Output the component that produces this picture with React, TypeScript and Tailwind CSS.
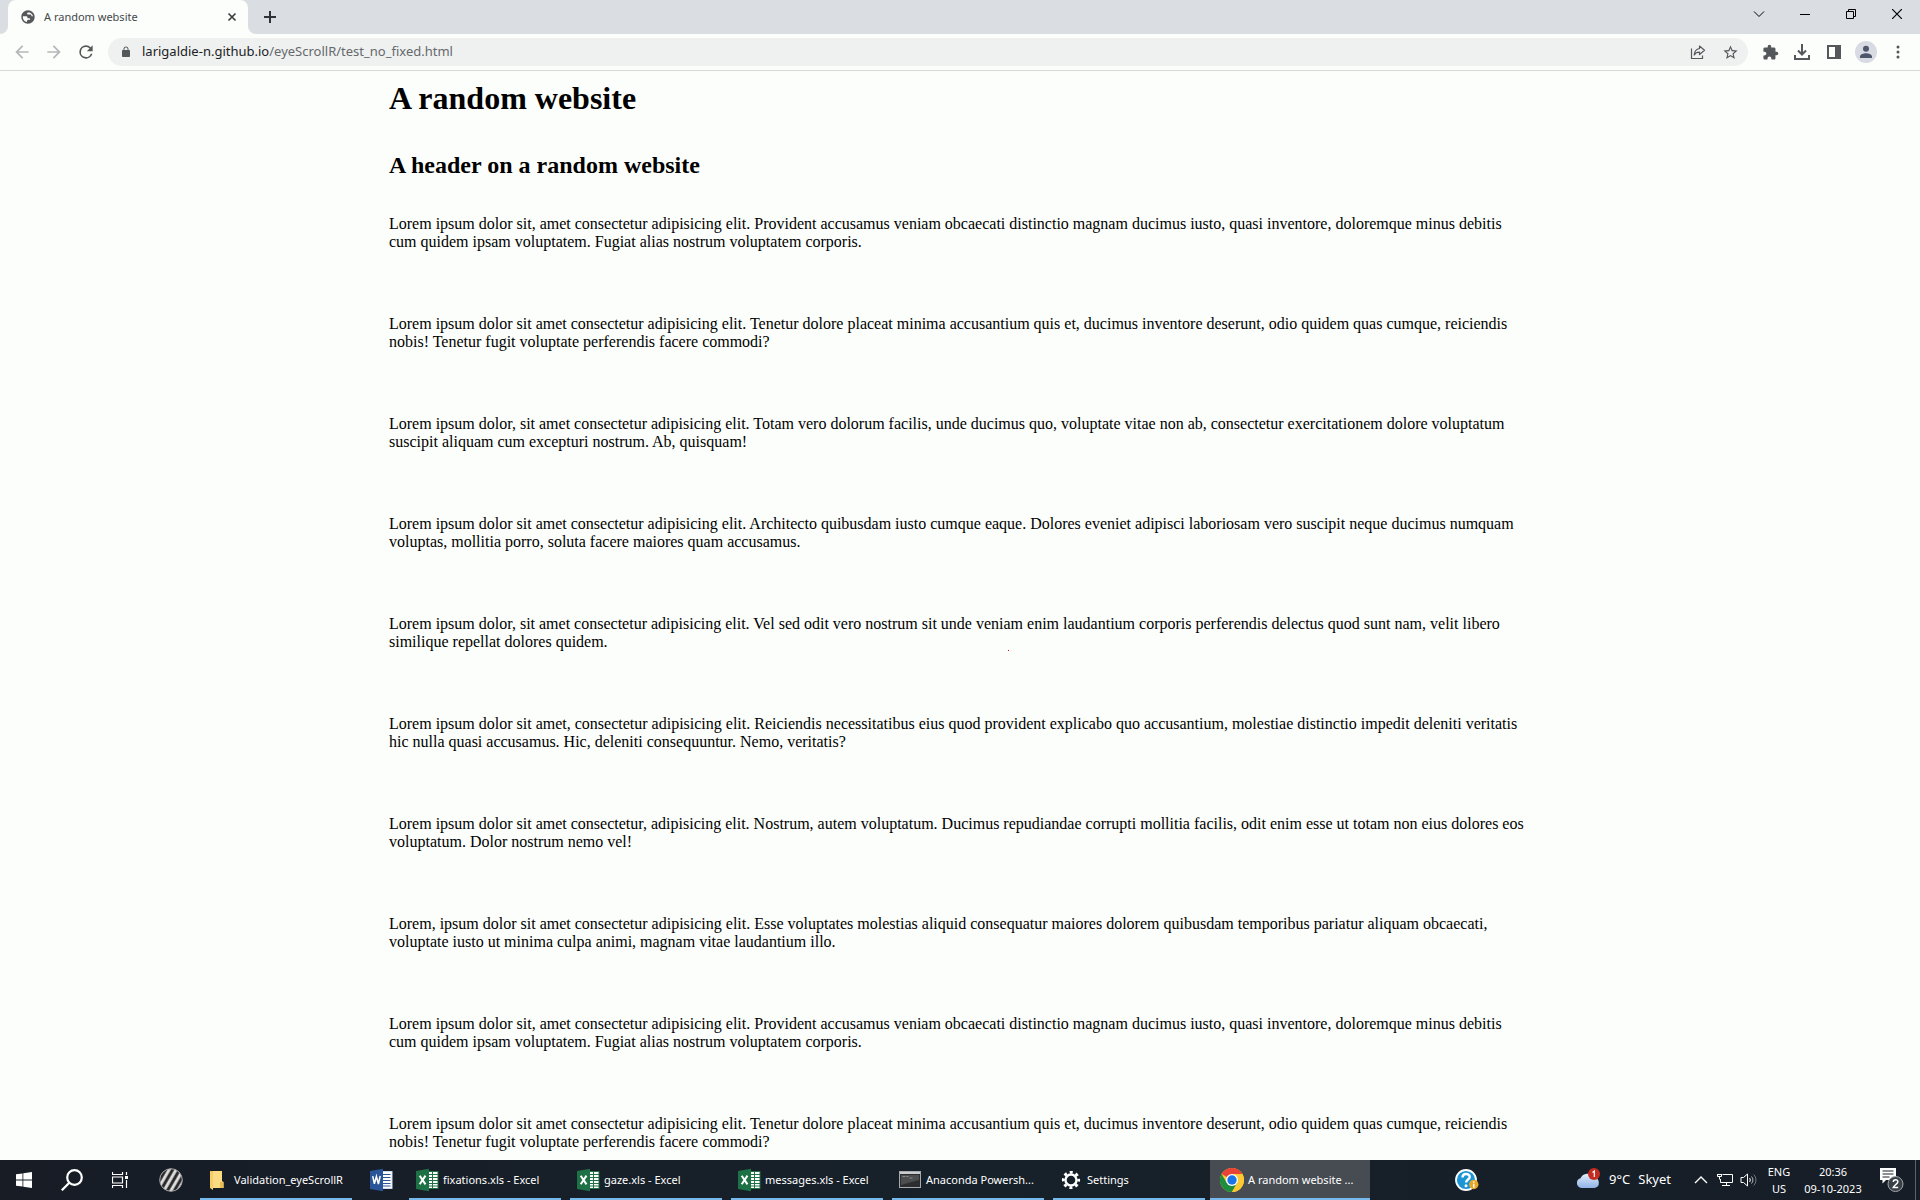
import React from "react";

const paragraphs = [
  "Lorem ipsum dolor sit, amet consectetur adipisicing elit. Provident accusamus veniam obcaecati distinctio magnam ducimus iusto, quasi inventore, doloremque minus debitis cum quidem ipsam voluptatem. Fugiat alias nostrum voluptatem corporis.",
  "Lorem ipsum dolor sit amet consectetur adipisicing elit. Tenetur dolore placeat minima accusantium quis et, ducimus inventore deserunt, odio quidem quas cumque, reiciendis nobis! Tenetur fugit voluptate perferendis facere commodi?",
  "Lorem ipsum dolor, sit amet consectetur adipisicing elit. Totam vero dolorum facilis, unde ducimus quo, voluptate vitae non ab, consectetur exercitationem dolore voluptatum suscipit aliquam cum excepturi nostrum. Ab, quisquam!",
  "Lorem ipsum dolor sit amet consectetur adipisicing elit. Architecto quibusdam iusto cumque eaque. Dolores eveniet adipisci laboriosam vero suscipit neque ducimus numquam voluptas, mollitia porro, soluta facere maiores quam accusamus.",
  "Lorem ipsum dolor, sit amet consectetur adipisicing elit. Vel sed odit vero nostrum sit unde veniam enim laudantium corporis perferendis delectus quod sunt nam, velit libero similique repellat dolores quidem.",
  "Lorem ipsum dolor sit amet, consectetur adipisicing elit. Reiciendis necessitatibus eius quod provident explicabo quo accusantium, molestiae distinctio impedit deleniti veritatis hic nulla quasi accusamus. Hic, deleniti consequuntur. Nemo, veritatis?",
  "Lorem ipsum dolor sit amet consectetur, adipisicing elit. Nostrum, autem voluptatum. Ducimus repudiandae corrupti mollitia facilis, odit enim esse ut totam non eius dolores eos voluptatum. Dolor nostrum nemo vel!",
  "Lorem, ipsum dolor sit amet consectetur adipisicing elit. Esse voluptates molestias aliquid consequatur maiores dolorem quibusdam temporibus pariatur aliquam obcaecati, voluptate iusto ut minima culpa animi, magnam vitae laudantium illo.",
  "Lorem ipsum dolor sit, amet consectetur adipisicing elit. Provident accusamus veniam obcaecati distinctio magnam ducimus iusto, quasi inventore, doloremque minus debitis cum quidem ipsam voluptatem. Fugiat alias nostrum voluptatem corporis.",
  "Lorem ipsum dolor sit amet consectetur adipisicing elit. Tenetur dolore placeat minima accusantium quis et, ducimus inventore deserunt, odio quidem quas cumque, reiciendis nobis! Tenetur fugit voluptate perferendis facere commodi?",
];

type IconProps = { d: string; className?: string; size?: number };

/* Filled glyph on a 24-unit grid */
function Glyph({ d, className = "", size = 18 }: IconProps) {
  return (
    <svg width={size} height={size} viewBox="0 0 24 24" fill="currentColor" className={className} aria-hidden="true">
      <path d={d} />
    </svg>
  );
}

const BACK = "M20 11H7.83l5.59-5.59L12 4l-8 8 8 8 1.41-1.41L7.83 13H20v-2z";
const FORWARD = "M12 4l-1.41 1.41L16.17 11H4v2h12.17l-5.58 5.59L12 20l8-8z";
const RELOAD =
  "M17.65 6.35A7.96 7.96 0 0 0 12 4a8 8 0 1 0 7.73 10h-2.08A6 6 0 1 1 12 6c1.66 0 3.14.69 4.22 1.78L13 11h7V4l-2.35 2.35z";
const LOCK =
  "M18 8h-1V6c0-2.76-2.24-5-5-5S7 3.24 7 6v2H6c-1.100 0-2 .9-2 2v10c0 1.100.9 2 2 2h12c1.100 0 2-.9 2-2V10c0-1.100-.9-2-2-2zM8.900 6c0-1.710 1.390-3.100 3.100-3.100s3.100 1.390 3.100 3.100v2H8.900V6z";
const GLOBE =
  "M12 2C6.480 2 2 6.480 2 12s4.480 10 10 10 10-4.480 10-10S17.520 2 12 2zm-1.500 17.600C7 19 4.300 15.900 4.300 12.200c0-.4 0-.8.1-1.200h4.800c1.200 0 2.100.9 2.100 2v.9h2.300c1 0 1.700.8 1.700 1.700v.6h-2.600c-1.200 0-2.200 1-2.200 2.200v1.200zM19.600 11h-2.400v-.9c0-.9-.8-1.700-1.700-1.700h-3.200c-.9 0-1.600-.7-1.600-1.600 0-1 .8-1.700 1.700-1.700h2.100c2.500 1 4.500 3.200 5.100 5.900z";
const STAR =
  "M22 9.240l-7.190-.62L12 2 9.190 8.630 2 9.240l5.460 4.730L5.820 21 12 17.270 18.180 21l-1.630-7.030L22 9.240zM12 15.400l-3.760 2.270 1-4.280-3.320-2.880 4.380-.38L12 6.100l1.710 4.040 4.380.38-3.320 2.880 1 4.280L12 15.400z";
const PUZZLE =
  "M20.500 11H19V7c0-1.100-.9-2-2-2h-4V3.500a2.500 2.500 0 0 0-5 0V5H4c-1.100 0-1.990.9-1.990 2v3.800H3.500c1.490 0 2.700 1.210 2.700 2.700s-1.210 2.700-2.700 2.700H2V20c0 1.100.9 2 2 2h3.800v-1.500c0-1.490 1.210-2.700 2.700-2.700s2.700 1.210 2.700 2.700V22H17c1.100 0 2-.9 2-2v-4h1.500a2.500 2.500 0 0 0 0-5z";
const PERSON = "M12 11.500a4.500 4.500 0 1 0 0-9 4.500 4.500 0 0 0 0 9zm0 2.200c-3.600 0-9 1.700-9 5.100V21h18v-2.200c0-3.400-5.400-5.100-9-5.100z";

function ExcelIcon() {
  return (
    <svg width="24" height="24" viewBox="0 0 24 24" aria-hidden="true">
      <rect x="12" y="3.500" width="11" height="17" fill="#fff" stroke="#207245" />
      <path d="M13 6.500h10M13 9.500h10M13 12.500h10M13 15.500h10M13 18h10M17.500 4v16" stroke="#207245" strokeWidth="1" />
      <path d="M1 3l13-2.300v22.600L1 21z" fill="#1e7145" />
      <path d="M4.700 7.800l5.800 8.600M10.500 7.600l-5.800 8.600" stroke="#fff" strokeWidth="2" />
    </svg>
  );
}

function WordIcon() {
  return (
    <svg width="24" height="24" viewBox="0 0 24 24" aria-hidden="true">
      <rect x="12" y="3.500" width="11" height="17" fill="#fff" stroke="#cfdcf0" />
      <path d="M13 6.500h8.500M13 9.500h8.500M13 12.500h8.500M13 15.500h8.500M13 18h8.500" stroke="#2a5699" strokeWidth="1.200" />
      <path d="M1 3l13-2.300v22.600L1 21z" fill="#2a5699" />
      <path d="M3.700 8.200l1.700 7.600 2-7.400 2 7.600 1.800-8" fill="none" stroke="#fff" strokeWidth="1.500" />
    </svg>
  );
}

function FolderIcon() {
  return (
    <svg width="24" height="24" viewBox="0 0 24 24" aria-hidden="true">
      <path d="M4 3h12v17H4z" fill="#e9b94a" />
      <path d="M7 3h9v10l1.500 1v6H7z" fill="#fbdc83" />
      <path d="M4 3l3 1.500V22l-3-2z" fill="#f6cf6c" />
      <path d="M14 14h3.500v6H14z" fill="#e9bd55" />
    </svg>
  );
}

function TerminalIcon() {
  return (
    <svg width="24" height="24" viewBox="0 0 24 24" aria-hidden="true">
      <rect x="1.500" y="3.500" width="21" height="16" fill="#2b2d2f" stroke="#a8abad" />
      <path d="M2 4h20v2H2z" fill="#c9cbcc" />
      <path d="M3 7h18v5L3 17z" fill="#4b4d4f" />
      <path d="M4.500 8.500h3M8.500 8.500h2M11.500 10h3" stroke="#898b8d" />
    </svg>
  );
}

function GearIcon() {
  return (
    <svg width="24" height="24" viewBox="0 0 24 24" fill="none" stroke="#fff" aria-hidden="true">
      <circle cx="12" cy="12" r="5.500" strokeWidth="2.400" />
      <circle cx="12" cy="12" r="7.700" strokeWidth="2.800" strokeDasharray="3 3.047" strokeDashoffset="1.500" />
    </svg>
  );
}

function ChromeIcon() {
  return (
    <svg width="24" height="24" viewBox="0 0 24 24" aria-hidden="true">
      <circle cx="12" cy="12" r="12" fill="#fcc934" />
      <path d="M12 12L1.600 6A12 12 0 0 1 22.400 6z" fill="#ea4335" />
      <path d="M1.600 6A12 12 0 0 0 12 24l5.200-9L12 12 6.800 15z" fill="#1e8e3e" />
      <path d="M12 6h10.400A12 12 0 0 1 12 24l5.200-9z" fill="#fcc934" />
      <circle cx="12" cy="12" r="6" fill="#fff" />
      <circle cx="12" cy="12" r="4.700" fill="#1a73e8" />
    </svg>
  );
}

function StripedBallIcon() {
  return (
    <svg width="24" height="24" viewBox="0 0 24 24" aria-hidden="true">
      <defs>
        <linearGradient id="stripe" x1="0" y1="0" x2="5.200" y2="3" gradientUnits="userSpaceOnUse" spreadMethod="repeat">
          <stop offset="0" stopColor="#222" />
          <stop offset="0.250" stopColor="#333" />
          <stop offset="0.500" stopColor="#e6e6e6" />
          <stop offset="0.750" stopColor="#d0d0d0" />
          <stop offset="1" stopColor="#222" />
        </linearGradient>
      </defs>
      <circle cx="12" cy="12" r="11.300" fill="url(#stripe)" stroke="#a5a5a5" />
    </svg>
  );
}

const tasks = [
  { label: "fixations.xls - Excel", icon: <ExcelIcon /> },
  { label: "gaze.xls - Excel", icon: <ExcelIcon /> },
  { label: "messages.xls - Excel", icon: <ExcelIcon /> },
  { label: "Anaconda Powersh...", icon: <TerminalIcon /> },
  { label: "Settings", icon: <GearIcon /> },
  { label: "A random website ...", icon: <ChromeIcon />, active: true },
];

function TaskButton({ label, icon, active = false }: { label: string; icon: React.ReactNode; active?: boolean }) {
  return (
    <button
      type="button"
      className={
        active
          ? "flex h-10 w-40 shrink-0 flex-col bg-[#474b52]"
          : "flex h-10 w-40 shrink-0 flex-col px-1"
      }
    >
      <span
        className={
          active
            ? "flex w-full flex-1 items-center gap-1 border-b-2 border-[#76b9ed] pt-0.5 pl-2.5"
            : "flex w-full flex-1 items-center gap-1 border-b-2 border-[#76b9ed] pt-0.5 pl-1.5"
        }
      >
        <span className="shrink-0">{icon}</span>
        <span className="whitespace-nowrap">{label}</span>
      </span>
    </button>
  );
}

function IconButton({ label, className, children }: { label: string; className: string; children: React.ReactNode }) {
  return (
    <button type="button" aria-label={label} className={`flex shrink-0 items-center justify-center ${className}`}>
      {children}
    </button>
  );
}

function TabStrip() {
  return (
    <div className="flex h-[34px] shrink-0 bg-[#dadde2]">
      <div className="flex w-2 items-end bg-[#fcfefb]">
        <span className="h-full w-full rounded-br-lg bg-[#dadde2]" />
      </div>
      <div className="bg-[#dadde2]">
        <div className="flex h-full w-60 items-center rounded-t-lg bg-[#fcfefb] pr-2 pl-3">
          <Glyph d={GLOBE} size={16} className="text-[#55585b]" />
          <span className="ml-2 flex-1 text-[11px] text-[#45484b]">A random website</span>
          <IconButton label="Close tab" className="size-4 text-[#3c4043]">
            <svg width="10" height="10" viewBox="0 0 10 10" stroke="currentColor" strokeWidth="1.700" aria-hidden="true">
              <path d="M1.500 1.500l7 7M8.500 1.500l-7 7" />
            </svg>
          </IconButton>
        </div>
      </div>
      <div className="flex w-2 bg-[#fcfefb]">
        <span className="h-full w-full rounded-bl-lg bg-[#dadde2]" />
      </div>
      <IconButton label="New tab" className="w-7 text-[#2f3336]">
        <svg width="12" height="12" viewBox="0 0 12 12" stroke="currentColor" strokeWidth="2" aria-hidden="true">
          <path d="M6 0v12M0 6h12" />
        </svg>
      </IconButton>
      <div className="ml-auto flex h-7 text-black">
        <IconButton label="Search tabs" className="w-[46px]">
          <svg width="12" height="8" viewBox="0 0 12 8" fill="none" stroke="currentColor" aria-hidden="true">
            <path d="M1 1.500l5 5 5-5" />
          </svg>
        </IconButton>
        <IconButton label="Minimize" className="w-[46px]">
          <svg width="10" height="10" viewBox="0 0 10 10" stroke="currentColor" aria-hidden="true">
            <path d="M0 5.500h10" />
          </svg>
        </IconButton>
        <IconButton label="Restore" className="w-[46px]">
          <svg width="10" height="10" viewBox="0 0 10 10" fill="none" stroke="currentColor" aria-hidden="true">
            <path d="M.5 2.500h7v7h-7zM2.500 2.500v-2h7v7h-2" />
          </svg>
        </IconButton>
        <IconButton label="Close" className="w-[46px]">
          <svg width="10" height="10" viewBox="0 0 10 10" stroke="currentColor" strokeWidth="1.200" aria-hidden="true">
            <path d="M0 0l10 10M10 0L0 10" />
          </svg>
        </IconButton>
      </div>
    </div>
  );
}

function Toolbar() {
  return (
    <div className="flex h-[37px] shrink-0 items-center border-b border-[#d6d8d9] bg-[#fcfefb] px-1.5 text-[#55585b]">
      <IconButton label="Back" className="h-7 w-8 text-[#b5b7b9]">
        <Glyph d={BACK} size={20} />
      </IconButton>
      <IconButton label="Forward" className="h-7 w-8 text-[#b5b7b9]">
        <Glyph d={FORWARD} size={20} />
      </IconButton>
      <IconButton label="Reload" className="h-7 w-8">
        <Glyph d={RELOAD} size={20} />
      </IconButton>
      <div className="mx-1.5 flex h-7 flex-1 items-center rounded-full bg-[#eff1f0] pr-0.5 pl-3">
        <Glyph d={LOCK} size={12} />
        <a href="#page" className="ml-2.5 flex-1 text-[13px] whitespace-nowrap text-[#66696c]">
          <span className="text-[#202124]">larigaldie-n.github.io</span>/eyeScrollR/test_no_fixed.html
        </a>
        <IconButton label="Share" className="h-7 w-8">
          <svg width="16" height="16" viewBox="0 0 16 16" fill="none" stroke="currentColor" strokeWidth="1.200" aria-hidden="true">
            <path d="M1.500 4.500v10h11v-3" />
            <path d="M9.500 2l5 4.300-5 4.200V8.200C7 8.200 5.300 9 4.200 11c.3-3.700 2.200-6 5.300-6.500z" strokeLinejoin="round" />
          </svg>
        </IconButton>
        <IconButton label="Bookmark" className="h-7 w-8">
          <Glyph d={STAR} size={17} />
        </IconButton>
      </div>
      <IconButton label="Extensions" className="h-7 w-8">
        <Glyph d={PUZZLE} size={17} />
      </IconButton>
      <IconButton label="Downloads" className="h-7 w-8">
        <svg width="16" height="16" viewBox="0 0 16 16" fill="none" stroke="currentColor" strokeWidth="2" aria-hidden="true">
          <path d="M8 0v10M4 6.500l4 4 4-4M1 11v4h14v-4" />
        </svg>
      </IconButton>
      <IconButton label="Side panel" className="h-7 w-8">
        <svg width="14" height="14" viewBox="0 0 14 14" aria-hidden="true">
          <rect x="1" y="1" width="12" height="12" fill="none" stroke="currentColor" strokeWidth="2" />
          <path d="M8 0h6v14H8z" fill="currentColor" />
        </svg>
      </IconButton>
      <IconButton label="Profile" className="h-7 w-8">
        <span className="flex size-[22px] items-center justify-center rounded-full bg-[#d8dbe3] text-[#4d566b]">
          <Glyph d={PERSON} size={16} />
        </span>
      </IconButton>
      <IconButton label="Menu" className="h-7 w-8">
        <svg width="4" height="14" viewBox="0 0 4 14" fill="currentColor" aria-hidden="true">
          <circle cx="2" cy="2" r="1.500" />
          <circle cx="2" cy="7" r="1.500" />
          <circle cx="2" cy="12" r="1.500" />
        </svg>
      </IconButton>
    </div>
  );
}

function Taskbar() {
  return (
    <footer className="flex h-10 shrink-0 items-center bg-linear-to-r from-[#171c25] via-[#17212a] to-[#161d26] text-[11px] text-white">
      <IconButton label="Start" className="h-10 w-12">
        <svg width="16" height="16" viewBox="0 0 16 16" fill="currentColor" aria-hidden="true">
          <path d="M0 2.300L6.500 1.400v6.200H0zM7.300 1.300L16 0v7.600H7.300zM0 8.400h6.500v6.200L0 13.700zM7.300 8.400H16V16l-8.700-1.300z" />
        </svg>
      </IconButton>
      <IconButton label="Search" className="h-10 w-12">
        <svg width="22" height="22" viewBox="0 0 22 22" fill="none" stroke="currentColor" strokeWidth="2.200" aria-hidden="true">
          <circle cx="13.500" cy="8.500" r="7.300" />
          <path d="M8.300 13.800L.8 21.300" />
        </svg>
      </IconButton>
      <IconButton label="Task view" className="h-10 w-12">
        <svg width="16" height="16" viewBox="0 0 16 16" fill="none" stroke="currentColor" strokeWidth="1.200" aria-hidden="true">
          <path d="M.5 0v2.500h10V0M.5 16v-2.500h10V16M.5 5h10v6H.5zM14.500 0v3M14.500 8v8" />
          <path d="M13 4h3v3h-3z" fill="currentColor" stroke="none" />
        </svg>
      </IconButton>
      <IconButton label="Input source" className="h-10 w-[52px] pl-0.5">
        <StripedBallIcon />
      </IconButton>
      <TaskButton label="Validation_eyeScrollR" icon={<FolderIcon />} />
      <IconButton label="Word" className="h-10 w-[49px]">
        <WordIcon />
      </IconButton>
      <div className="flex gap-px">
        {tasks.map((t) => (
          <TaskButton key={t.label} label={t.label} icon={t.icon} active={t.active} />
        ))}
      </div>
      <IconButton label="Help" className="mr-[84px] ml-auto h-10 w-12">
        <svg width="24" height="24" viewBox="0 0 24 24" aria-hidden="true">
          <circle cx="11" cy="12" r="10" fill="#1b95d3" stroke="#fff" strokeWidth="1.800" />
          <path d="M7.500 9.500c0-4.500 7.200-4.500 7.200-.6 0 2.600-3.600 2.700-3.600 5.600" fill="none" stroke="#fff" strokeWidth="2.400" />
          <circle cx="11" cy="17.700" r="1.500" fill="#fff" />
          <circle cx="18.800" cy="16.500" r="4.700" fill="#e9a72a" />
          <path d="M18.800 13.300v1.400M18.800 15.700v4" stroke="#fff" strokeWidth="1.400" />
        </svg>
      </IconButton>
      <button type="button" className="flex h-10 items-center gap-2 text-[13px]">
        <svg width="26" height="24" viewBox="0 0 26 24" aria-hidden="true">
          <defs>
            <linearGradient id="cloud" x1="0" y1="0" x2="0" y2="1">
              <stop offset="0" stopColor="#e4eefb" />
              <stop offset="1" stopColor="#8fb2e6" />
            </linearGradient>
          </defs>
          <path d="M6 20a5 5 0 0 1-.5-9.700A7.500 7.500 0 0 1 19 9.500a5.300 5.300 0 0 1 .5 10.500z" fill="url(#cloud)" />
          <circle cx="19" cy="6" r="6" fill="#c52c21" />
          <path d="M17.500 4.500L19.300 3v6" fill="none" stroke="#fff" strokeWidth="1.200" />
        </svg>
        <span>9°C</span>
        <span>Skyet</span>
      </button>
      <IconButton label="Show hidden icons" className="ml-4.5 h-10 w-6">
        <svg width="14" height="8" viewBox="0 0 14 8" fill="none" stroke="currentColor" strokeWidth="1.400" aria-hidden="true">
          <path d="M1 7l6-6 6 6" />
        </svg>
      </IconButton>
      <IconButton label="Network" className="h-10 w-6">
        <svg width="16" height="14" viewBox="0 0 16 14" fill="none" stroke="currentColor" aria-hidden="true">
          <path d="M5.500 1.500h10v8h-12V6M9.500 9.500v3M5 12.500h8M.5 1v2.500h4V1M2.500 3.500v3M.5 1.500h4" />
        </svg>
      </IconButton>
      <IconButton label="Volume" className="h-10 w-6">
        <svg width="18" height="14" viewBox="0 0 18 14" fill="none" stroke="currentColor" aria-hidden="true">
          <path d="M1 4.500h2.500L7.500 1v12l-4-3.500H1z" />
          <path d="M9.500 5c1 1.200 1 2.800 0 4" />
          <path d="M11.500 3.500c1.900 2 1.900 5 0 7" opacity=".7" />
          <path d="M13.700 1.500c3 3 3 8 0 11" opacity=".4" />
        </svg>
      </IconButton>
      <button type="button" className="h-10 w-9 text-center leading-[17px]">
        ENG
        <br />
        US
      </button>
      <button type="button" className="h-10 w-[72px] text-center leading-[17px]">
        20:36
        <br />
        09-10-2023
      </button>
      <IconButton label="Notifications" className="h-10 w-11">
        <svg width="26" height="26" viewBox="0 0 26 26" aria-hidden="true">
          <path d="M2 1h16v12H8l-3.500 3.500V13H2z" fill="#fff" />
          <path d="M4.500 4h11M4.500 7h11M4.500 10h7" stroke="#1a212a" strokeWidth="1.200" />
          <circle cx="17.500" cy="17" r="7.500" fill="#3a4047" stroke="#a3a7aa" />
          <path d="M15.300 15c0-3 4.600-3 4.600-.2 0 2-4.300 4-4.700 5.700h5" fill="none" stroke="#fff" strokeWidth="1.500" />
        </svg>
      </IconButton>
      <span className="mr-1 ml-0.5 h-10 w-px bg-[#5d6369]" />
    </footer>
  );
}

export default function App() {
  return (
    <div className="flex h-screen flex-col overflow-hidden bg-[#fcfefb] font-['Noto_Sans',sans-serif]">
      <TabStrip />
      <Toolbar />
      <main id="page" className="relative min-h-0 flex-1 overflow-hidden">
        <article className="mx-auto w-3/5 px-[5px] pt-[9px] font-['Liberation_Serif',serif] text-base leading-[18px] text-black">
          <h1 className="mb-[35px] text-[32px] leading-9 font-bold">A random website</h1>
          <h2 className="mb-9 text-2xl leading-7 font-bold">A header on a random website</h2>
          {paragraphs.map((text, i) => (
            <p key={i} className="mb-16">
              {text}
            </p>
          ))}
        </article>
        <span className="absolute top-[579px] left-[1008px] size-px bg-red-600" />
      </main>
      <Taskbar />
    </div>
  );
}
